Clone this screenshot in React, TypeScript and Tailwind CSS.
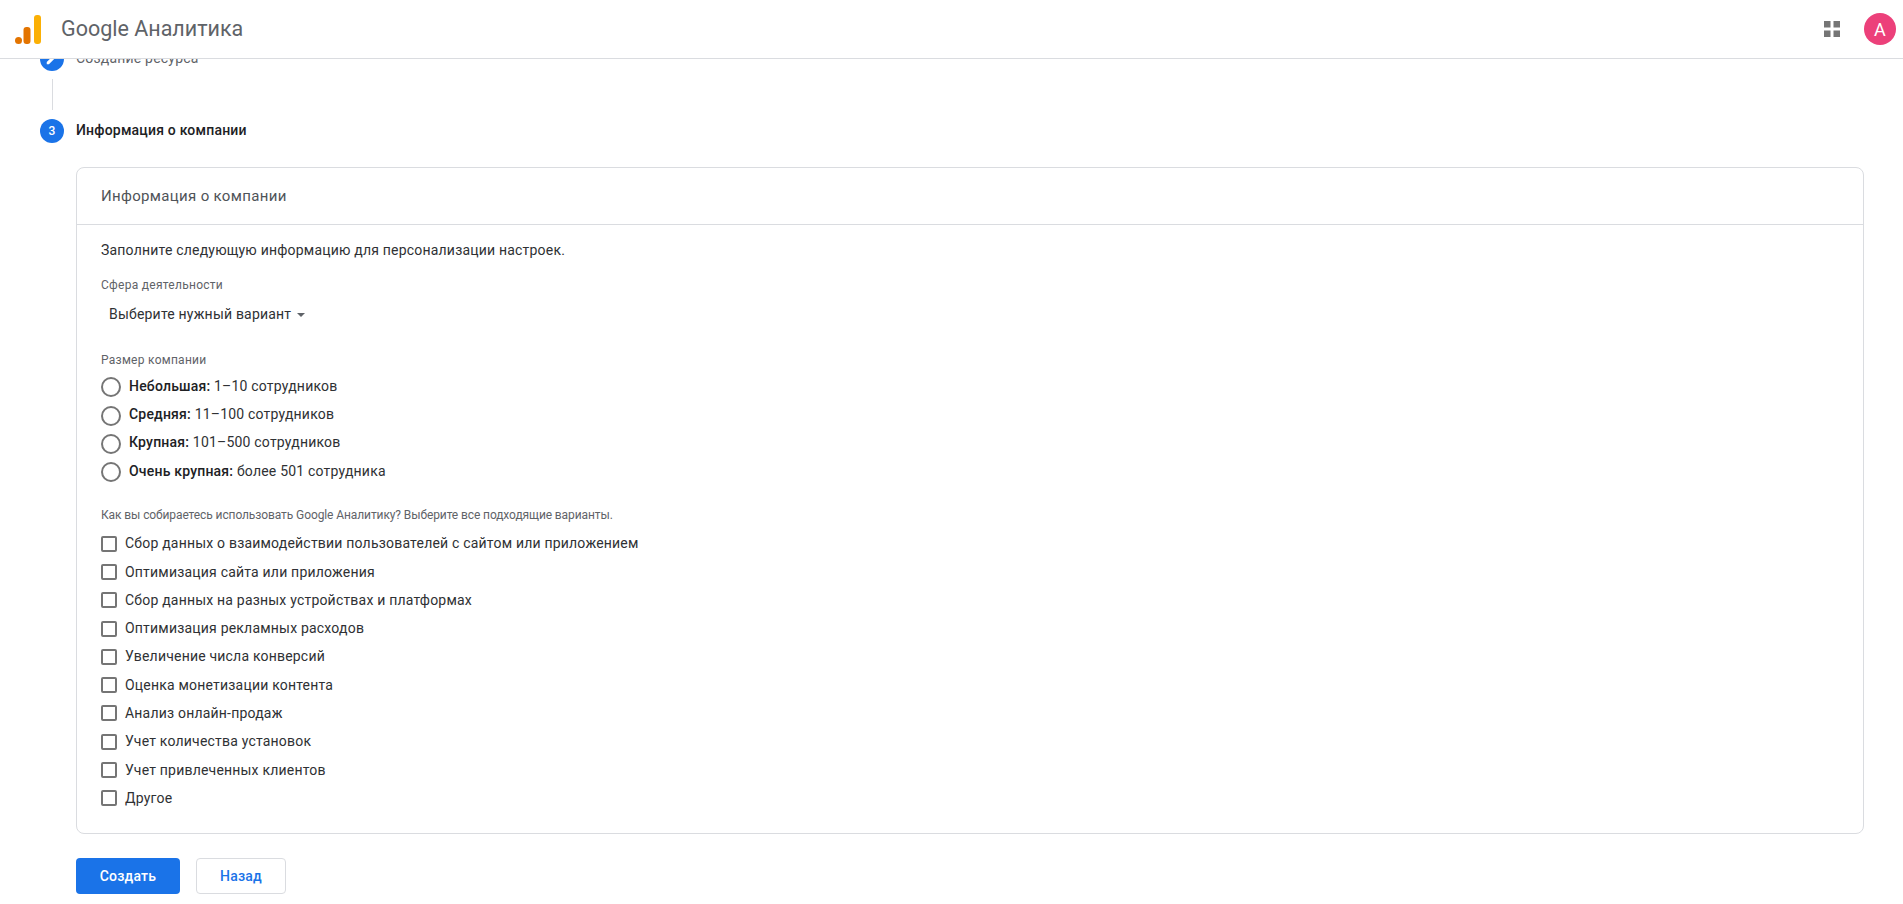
import React from 'react';

const sizes = [
  { name: 'Небольшая:', rest: '1–10 сотрудников' },
  { name: 'Средняя:', rest: '11–100 сотрудников' },
  { name: 'Крупная:', rest: '101–500 сотрудников' },
  { name: 'Очень крупная:', rest: 'более 501 сотрудника' },
];

const goals = [
  'Сбор данных о взаимодействии пользователей с сайтом или приложением',
  'Оптимизация сайта или приложения',
  'Сбор данных на разных устройствах и платформах',
  'Оптимизация рекламных расходов',
  'Увеличение числа конверсий',
  'Оценка монетизации контента',
  'Анализ онлайн-продаж',
  'Учет количества установок',
  'Учет привлеченных клиентов',
  'Другое',
];

const Logo = () => (
  <svg width="26" height="29" viewBox="0 0 26 29">
    <rect x="19" y="0" width="7" height="29" rx="3" fill="#fbb005" />
    <rect x="8.5" y="12" width="7" height="17" rx="3" fill="#e37400" />
    <circle cx="3.5" cy="25.5" r="3.5" fill="#e37400" />
  </svg>
);

const Header = () => (
  <header className="relative z-10 flex h-[59px] shrink-0 items-center justify-between border-b border-[#dadce0] bg-white pl-[15px] pr-[7px]">
    <div className="flex items-center">
      <Logo />
      <span className="ml-[20px] text-[21.5px] tracking-normal text-[#5f6368]">Google Аналитика</span>
    </div>
    <div className="flex items-center gap-[24px]">
      <svg width="16" height="16" viewBox="0 0 16 16" fill="#757575">
        <rect x="0" y="0" width="6.5" height="6.5" />
        <rect x="9.5" y="0" width="6.5" height="6.5" />
        <rect x="0" y="9.5" width="6.5" height="6.5" />
        <rect x="9.5" y="9.5" width="6.5" height="6.5" />
      </svg>
      <div className="flex h-8 w-8 items-center justify-center rounded-full bg-[#ec407a] text-[18px] text-white">A</div>
    </div>
  </header>
);

const Steps = () => (
  <div className="pl-[40px]">
    <div className="-mt-[12px] flex h-[24px] items-center">
      <div className="flex h-6 w-6 items-center justify-center rounded-full bg-[#1a73e8]">
        <svg width="14" height="14" viewBox="0 0 24 24" fill="#fff">
          <path d="M3 17.25V21h3.75L17.81 9.94l-3.75-3.75L3 17.25zM20.71 7.04a1 1 0 0 0 0-1.41l-2.34-2.34a1 1 0 0 0-1.41 0l-1.83 1.83 3.75 3.75 1.83-1.83z" />
        </svg>
      </div>
      <span className="ml-[12px] -translate-y-px text-[14px] text-[#5f6368]">Создание ресурса</span>
    </div>
    <div className="ml-[12px] mt-[8px] h-[31px] w-px bg-[#dadce0]" />
    <div className="mt-[9px] flex h-[24px] items-center">
      <div className="flex h-6 w-6 items-center justify-center rounded-full bg-[#1a73e8] text-[12px] font-medium text-white">3</div>
      <span className="ml-[12px] -translate-y-px text-[14px] font-medium text-[#202124]">Информация о компании</span>
    </div>
  </div>
);

const Card = () => (
  <section className="ml-[76px] mr-[39px] mt-[24px] h-[667px] rounded-[8px] border border-[#dadce0] bg-white">
    <h2 className="flex h-[57px] items-center border-b border-[#dadce0] pl-[24px] text-[15px] tracking-[0.33px] text-[#4f5358]">Информация о компании</h2>
    <div className="pl-[24px] pt-[15px] text-[14px] text-[#2f3134]">
      <p className="leading-[20px]">Заполните следующую информацию для персонализации настроек.</p>
      <p className="mt-[17px] text-[12px] leading-[16px] tracking-[0.27px] text-[#5f6368]">Сфера деятельности</p>
      <div className="mt-[11px] flex h-[20px] items-center pl-[8px]">
        <span>Выберите нужный вариант</span>
        <span className="ml-[6px] mt-[1px] h-0 w-0 border-x-[4px] border-t-[4px] border-x-transparent border-t-[#5f6368]" />
      </div>
      <p className="mt-[28px] text-[12px] leading-[16px] tracking-[0.27px] text-[#5f6368]">Размер компании</p>
      <ul className="mt-[4px]">
        {sizes.map((s) => (
          <li key={s.name} className="flex h-[28.4px] items-center">
            <span className="mt-[2px] h-[20px] w-[20px] rounded-full border-2 border-[#757575]" />
            <span className="ml-[8px]">
              <b className="font-medium text-[#202124]">{s.name}</b> {s.rest}
            </span>
          </li>
        ))}
      </ul>
      <p className="mt-[21px] text-[12px] leading-[16px] tracking-[-0.1px] text-[#5f6368]">
        Как вы собираетесь использовать Google Аналитику? Выберите все подходящие варианты.
      </p>
      <ul className="mt-[7px]">
        {goals.map((g) => (
          <li key={g} className="flex h-[28.3px] items-center">
            <span className="h-[16px] w-[16px] rounded-[2px] border-2 border-[#757575]" />
            <span className="ml-[8px]">{g}</span>
          </li>
        ))}
      </ul>
    </div>
  </section>
);

export default function App() {
  return (
    <div className="flex h-screen flex-col overflow-hidden bg-white font-['Roboto','Noto_Sans',sans-serif] tracking-[0.2px]">
      <Header />
      <main className="flex-1 overflow-hidden">
        <Steps />
        <Card />
        <div className="ml-[76px] mt-[24px] flex gap-4">
          <button className="h-[36px] w-[104px] rounded-[4px] bg-[#1a73e8] text-[14px] font-medium text-white">Создать</button>
          <button className="h-[36px] w-[90px] rounded-[4px] border border-[#dadce0] bg-white text-[14px] font-medium text-[#1a73e8]">Назад</button>
        </div>
      </main>
    </div>
  );
}
